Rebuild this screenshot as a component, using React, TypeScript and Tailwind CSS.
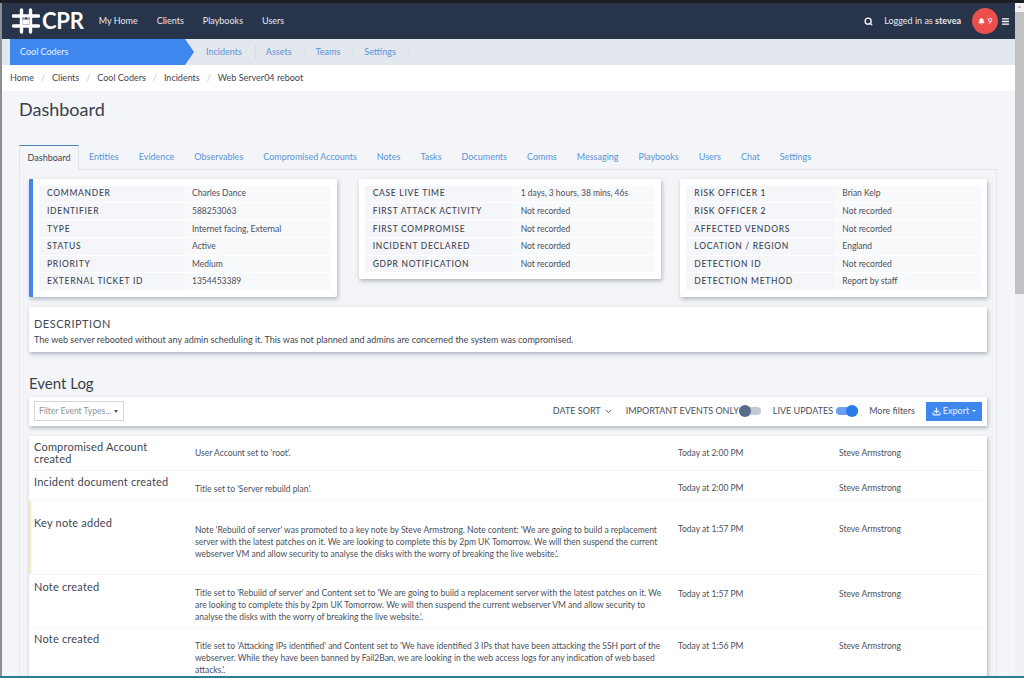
import { Search, Bell, Menu, ChevronDown, Download } from 'lucide-react';

const F = "font-['Lato','Noto_Sans',sans-serif]";

const mainNav = ['My Home', 'Clients', 'Playbooks', 'Users'];
const subNav = ['Incidents', 'Assets', 'Teams', 'Settings'];
const crumbs = ['Home', 'Clients', 'Cool Coders', 'Incidents', 'Web Server04 reboot'];
const tabs = ['Entities', 'Evidence', 'Observables', 'Compromised Accounts', 'Notes', 'Tasks', 'Documents', 'Comms', 'Messaging', 'Playbooks', 'Users', 'Chat', 'Settings'];

const card1 = [
  ['COMMANDER', 'Charles Dance'],
  ['IDENTIFIER', '588253063'],
  ['TYPE', 'Internet facing, External'],
  ['STATUS', 'Active'],
  ['PRIORITY', 'Medium'],
  ['EXTERNAL TICKET ID', '1354453389'],
];
const card2 = [
  ['CASE LIVE TIME', '1 days, 3 hours, 38 mins, 46s'],
  ['FIRST ATTACK ACTIVITY', 'Not recorded'],
  ['FIRST COMPROMISE', 'Not recorded'],
  ['INCIDENT DECLARED', 'Not recorded'],
  ['GDPR NOTIFICATION', 'Not recorded'],
];
const card3 = [
  ['RISK OFFICER 1', 'Brian Kelp'],
  ['RISK OFFICER 2', 'Not recorded'],
  ['AFFECTED VENDORS', 'Not recorded'],
  ['LOCATION / REGION', 'England'],
  ['DETECTION ID', 'Not recorded'],
  ['DETECTION METHOD', 'Report by staff'],
];

const events = [
  { title: 'Compromised Account created', text: "User Account set to 'root'.", date: 'Today at 2:00 PM', h: 'h-[35px]', pad: 'pt-[11px]', metaPad: 'pt-[11px]', titlePad: 'pt-[5px]' },
  { title: 'Incident document created', text: "Title set to 'Server rebuild plan'.", date: 'Today at 2:00 PM', h: 'h-[30px]', pad: 'pt-[12px]', metaPad: 'pt-[11px]', titlePad: 'pt-[5px]' },
  {
    title: 'Key note added',
    text: "Note 'Rebuild of server' was promoted to a key note by Steve Armstrong. Note content: 'We are going to build a replacement server with the latest patches on it. We are looking to complete this by 2pm UK Tomorrow. We will then suspend the current webserver VM and allow security to analyse the disks with the worry of breaking the live website.'.",
    date: 'Today at 1:57 PM', h: 'h-[74px]', pad: 'pt-[23px]', metaPad: 'pt-[22px]', titlePad: 'pt-[16px]', key: true,
  },
  {
    title: 'Note created',
    text: "Title set to 'Rebuild of server' and Content set to 'We are going to build a replacement server with the latest patches on it. We are looking to complete this by 2pm UK Tomorrow. We will then suspend the current webserver VM and allow security to analyse the disks with the worry of breaking the live website.'.",
    date: 'Today at 1:57 PM', h: 'h-[53px]', pad: 'pt-[12px]', metaPad: 'pt-[13px]', titlePad: 'pt-[6px]',
  },
  {
    title: 'Note created',
    text: "Title set to 'Attacking IPs identified' and Content set to 'We have identified 3 IPs that have been attacking the SSH port of the webserver. While they have been banned by Fail2Ban, we are looking in the web access logs for any indication of web based attacks.'.",
    date: 'Today at 1:56 PM', h: 'h-[60px]', pad: 'pt-[12px]', metaPad: 'pt-[12px]', titlePad: 'pt-[5px]',
  },
];

function Logo() {
  return (
    <svg width="28" height="26" viewBox="0 0 28 26" fill="none">
      <g stroke="#ffffff" strokeWidth="3.4" strokeLinecap="round">
        <path d="M9.5 2v22M18.5 2v22M1.5 8h25M1.5 18h25" />
      </g>
      <rect x="10.5" y="9.5" width="7" height="7" fill="#283449" />
      <rect x="10.5" y="11.5" width="7" height="5" rx="0.5" fill="#ffffff" />
      <path d="M12 11.5V10a2 2 0 0 1 4 0v1.5" stroke="#ffffff" strokeWidth="1" />
    </svg>
  );
}

function InfoTable({ rows, labelW }: { rows: string[][]; labelW: string }) {
  return (
    <div className="flex flex-col">
      {rows.map(([label, value]) => (
        <div key={label} className="flex h-[17.6px] items-center">
          <div className={`${labelW} h-[16.6px] flex items-center bg-[#f5f6f9] pl-2 text-[8.5px] font-medium tracking-[0.7px] text-[#3f4652]`}>{label}</div>
          <div className="flex-1 h-[16.6px] flex items-center bg-[#f8f9fb] pl-2 text-[8.5px] text-[#4a505b]">{value}</div>
        </div>
      ))}
    </div>
  );
}

function Toggle({ on }: { on: boolean }) {
  return (
    <span className={`relative inline-block h-[8px] w-[22px] rounded-full ${on ? 'bg-[#6d9ff0]' : 'bg-[#c3c9d4]'}`}>
      <span className={`absolute top-[-2px] h-[12px] w-[12px] rounded-full ${on ? 'right-0 bg-[#2a7be8]' : 'left-0 bg-[#5a6b88]'}`} />
    </span>
  );
}

export default function App() {
  return (
    <div className={`${F} flex h-[678px] w-[1024px] flex-col overflow-hidden bg-white text-[#3b4250]`}>
      <div className="h-[3px] shrink-0 bg-[#1c2026]" />
      <div className="flex min-h-0 flex-1">
        <div className="w-[2px] shrink-0 bg-[#8d8f92]" />
        <div className="flex min-w-0 flex-1 flex-col">
          {/* Top nav */}
          <div className="flex h-[36px] shrink-0 items-center bg-[#283449] pl-[10px] text-white">
            <Logo />
            <span className="ml-[2px] text-[22px] leading-none font-bold tracking-[-0.2px]">CPR</span>
            <nav className="ml-[15px] flex gap-[19px] text-[9px] text-[#e4e8ef]">
              {mainNav.map((n) => <span key={n}>{n}</span>)}
            </nav>
            <div className="ml-auto flex items-center pr-[5px]">
              <Search size={9} strokeWidth={3.5} className="text-white" />
              <span className="ml-[11px] text-[9px] text-[#e4e8ef]">Logged in as <span className="font-bold">stevea</span></span>
              <span className="ml-[11px] flex h-[26px] w-[26px] items-center justify-center gap-[3px] rounded-full bg-[#ea4f4b] text-[8px]">
                <Bell size={7} fill="#ffffff" />9
              </span>
              <Menu size={9} strokeWidth={3.5} className="ml-[3px]" />
            </div>
          </div>
          {/* Sub nav */}
          <div className="flex h-[26px] shrink-0 items-center bg-[#e3e7ee] pl-[8px]">
            <div className="relative flex h-full w-[175px] items-center bg-[#3d87ee] pl-[10px] text-[9px] text-[#eaf2ff]">
              Cool Coders
              <span className="absolute top-0 left-full h-0 w-0 border-y-[13px] border-l-[9px] border-y-transparent border-l-[#3d87ee]" />
            </div>
            <div className="ml-[21px] flex text-[9px] text-[#5b94d8]">
              {subNav.map((n) => (
                <span key={n} className="border-r border-[#d8dde5] pr-[13px] mr-[10px]">{n}</span>
              ))}
            </div>
          </div>
          {/* Breadcrumbs */}
          <div className="flex h-[26px] shrink-0 items-center gap-[7px] bg-white pl-[8px] text-[9px] text-[#3f4652]">
            {crumbs.map((c, i) => (
              <span key={c} className="flex items-center gap-[7px]">
                {i > 0 && <span className="text-[#c4c9d1]">/</span>}
                {c}
              </span>
            ))}
          </div>
          {/* Page */}
          <div className="min-h-0 flex-1 overflow-hidden bg-[#f3f5f9] pl-[17px] pr-[18px]">
            <h1 className="mt-[6px] text-[18px] leading-[24px] font-normal text-[#3a404c]">Dashboard</h1>
            <div className="mt-[25px] flex h-[24px] items-end border-b border-[#dfe3ea] text-[9px] text-[#5b94d8]">
              <span className="-mb-px flex h-[25px] w-[60px] items-center justify-center border-x border-t border-x-[#dfe3ea] border-t-[#4a7fb8] bg-[#f3f5f9] text-[#3f4652]">Dashboard</span>
              <div className="flex h-[24px] items-center gap-[20px] pl-[10px]">
                {tabs.map((t) => <span key={t}>{t}</span>)}
              </div>
            </div>
            <div className="h-[560px] border-l border-r border-[#e6e9ef] px-[9px] pt-[9px]">
              <div className="flex items-start justify-between">
                <div className="w-[308px] rounded-[1px] border-l-4 border-[#3d87ee] bg-white px-[6px] py-[6px] shadow-[1px_2px_4px_rgba(90,100,120,0.45)]">
                  <InfoTable rows={card1} labelW="w-[145px]" />
                </div>
                <div className="ml-[22px] w-[303px] rounded-[1px] bg-white px-[6px] py-[6px] shadow-[1px_2px_4px_rgba(90,100,120,0.45)]">
                  <InfoTable rows={card2} labelW="w-[148px]" />
                </div>
                <div className="ml-[19px] w-[307px] rounded-[1px] bg-white px-[6px] py-[6px] shadow-[1px_2px_4px_rgba(90,100,120,0.45)]">
                  <InfoTable rows={card3} labelW="w-[148px]" />
                </div>
              </div>
              {/* Description */}
              <div className="mt-[10px] h-[45px] bg-white pl-[5px] pt-[10px] shadow-[1px_2px_4px_rgba(90,100,120,0.45)]">
                <div className="text-[11px] leading-[14px] tracking-[0.5px] text-[#3f4652]">DESCRIPTION</div>
                <p className="mt-[3px] text-[9px] leading-[12px] text-[#3f4652]">The web server rebooted without any admin scheduling it. This was not planned and admins are concerned the system was compromised.</p>
              </div>
              {/* Event log */}
              <h2 className="mt-[21px] text-[15px] leading-[20px] font-normal text-[#3a404c]">Event Log</h2>
              <div className="mt-[4px] flex h-[29px] items-center bg-white pl-[5px] pr-[5px] shadow-[1px_2px_4px_rgba(90,100,120,0.45)]">
                <div className="flex h-[20px] w-[90px] items-center justify-between border border-[#d9d5d2] pl-[4px] pr-[5px] text-[8.5px] text-[#8d929b]">
                  Filter Event Types...
                  <span className="h-0 w-0 border-x-[2px] border-t-[3px] border-x-transparent border-t-[#555]" />
                </div>
                <div className="ml-auto flex items-center text-[9px] text-[#4a505b]">
                  <span className="flex items-center gap-[3px]">DATE SORT <ChevronDown size={9} strokeWidth={2.5} /></span>
                  <span className="ml-[13px]">IMPORTANT EVENTS ONLY</span>
                  <Toggle on={false} />
                  <span className="ml-[12px] mr-[3px]">LIVE UPDATES</span>
                  <Toggle on />
                  <span className="ml-[11px]">More filters</span>
                  <span className="ml-[11px] flex h-[19px] w-[56px] items-center justify-center gap-[2px] bg-[#3d87ee] text-[#eaf2ff]">
                    <Download size={9} strokeWidth={3} />Export
                    <span className="ml-[1px] h-0 w-0 border-x-[2px] border-t-[2px] border-x-transparent border-t-white" />
                  </span>
                </div>
              </div>
              <div className="mt-[10px] bg-white shadow-[1px_2px_4px_rgba(90,100,120,0.45)]">
                {events.map((e, i) => (
                  <div key={i} className={`flex ${e.h} border-b border-[#f5f6f9] ${e.key ? 'border-l-2 border-l-[#f3eeb0]' : ''}`}>
                    <div className={`${e.key ? 'w-[164px] pl-[3px]' : 'w-[166px] pl-[5px]'} shrink-0 pr-[14px] text-[11px] leading-[12px] tracking-[0.2px] text-[#3f4652] ${e.titlePad}`}>{e.title}</div>
                    <div className={`w-[483px] shrink-0 pr-[12px] text-[8.5px] leading-[12px] text-[#4a505b] ${e.pad}`}>{e.text}</div>
                    <div className={`w-[161px] shrink-0 text-[8.5px] leading-[12px] text-[#4a505b] ${e.metaPad}`}>{e.date}</div>
                    <div className={`text-[8.5px] leading-[12px] text-[#4a505b] ${e.metaPad}`}>Steve Armstrong</div>
                  </div>
                ))}
              </div>
            </div>
          </div>
        </div>
        {/* Browser scrollbar */}
        <div className="flex w-[9px] shrink-0 flex-col bg-[#f1f1f1]">
          <div className="flex h-[9px] items-center justify-center text-[6px] text-[#555]">^</div>
          <div className="h-[282px] bg-[#c1c1c1]" />
        </div>
      </div>
      <div className="h-[2px] shrink-0 bg-[#2a7d96]" />
    </div>
  );
}
